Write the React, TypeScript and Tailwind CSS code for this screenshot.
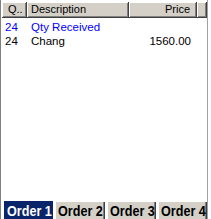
import React from 'react';

interface Row {
    qty: string;
    description: string;
    price: string;
    blue?: boolean;
}

const rows: Row[] = [
    { qty: '24', description: 'Qty Received', price: '', blue: true },
    { qty: '24', description: 'Chang', price: '1560.00' },
];

const tabs = ['Order 1', 'Order 2', 'Order 3', 'Order 4'];

const headCell =
    'h-[16px] bg-[#d4d0c8] border-r border-b border-[#404040] shadow-[inset_1px_1px_#ffffff,inset_-1px_-1px_#808080] flex items-center text-[11px] text-black leading-none';

export default function App() {
    return (
        <div
            className="w-[211px] h-[219px] bg-white flex flex-col overflow-hidden"
            style={{ fontFamily: '"Liberation Sans", Arial, sans-serif' }}
        >
            <div className="flex-1 flex flex-col border-l border-[#808080] border-r-[3px] border-r-white">
                <div className="flex-1 flex flex-col border-r border-[#a0a0a0] pt-[2px] pl-[1px]">
                    {/* header */}
                    <div className="flex">
                        <div className={`${headCell} w-[25px] pl-[6px]`}>Q..</div>
                        <div className={`${headCell} w-[102px] pl-[4px]`}>Description</div>
                        <div className={`${headCell} w-[68px] justify-end pr-[6px]`}>Price</div>
                        <div className={`${headCell} flex-1`} />
                    </div>

                    {/* rows */}
                    <div className="flex flex-col pt-[3px]">
                        {rows.map((row, i) => (
                            <div
                                key={i}
                                className={`flex h-[14px] items-center text-[11.5px] leading-none ${
                                    row.blue ? 'text-[#0000ff]' : 'text-black'
                                }`}
                            >
                                <div className="w-[25px] pl-[3px]">{row.qty}</div>
                                <div className="w-[102px] pl-[4px]">{row.description}</div>
                                <div className="w-[68px] text-right pr-[6px]">{row.price}</div>
                            </div>
                        ))}
                    </div>

                    <div className="flex-1" />

                    {/* tabs */}
                    <div className="flex gap-[2px] pl-[2px] h-[18px]">
                        {tabs.map((tab, i) => (
                            <div
                                key={tab}
                                className={`w-[50px] h-[18px] flex items-center pl-[3px] pt-[1px] whitespace-nowrap overflow-hidden ${
                                    i === 0
                                        ? 'bg-[#0a246a] text-white'
                                        : 'bg-[#d4d0c8] text-black shadow-[inset_1px_1px_#ffffff,inset_-1px_0_#404040,inset_-2px_0_#808080]'
                                }`}
                            >
                                <span className="inline-block origin-left scale-x-90 text-[14px] font-bold leading-none">
                                    {tab}
                                </span>
                            </div>
                        ))}
                    </div>
                </div>
            </div>
        </div>
    );
}
